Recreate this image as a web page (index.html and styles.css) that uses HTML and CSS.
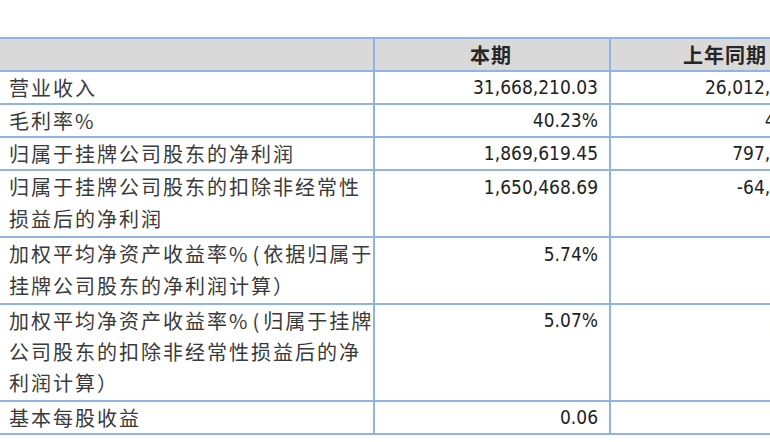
FILE: index.html
```html
<!DOCTYPE html>
<html lang="zh-CN">
<head>
<meta charset="utf-8">
<title>主要财务数据</title>
<link rel="stylesheet" href="styles.css">
</head>
<body>
<div class="page">
  <table class="fin">
    <colgroup>
      <col class="c-label">
      <col class="c-cur">
      <col class="c-prev">
    </colgroup>
    <thead>
      <tr>
        <th></th>
        <th>本期</th>
        <th>上年同期</th>
      </tr>
    </thead>
    <tbody>
      <tr>
        <td class="label">营业收入</td>
        <td class="num">31,668,210.03</td>
        <td class="num">26,012,068.31</td>
      </tr>
      <tr>
        <td class="label">毛利率%</td>
        <td class="num">40.23%</td>
        <td class="num">40.41%</td>
      </tr>
      <tr>
        <td class="label">归属于挂牌公司股东的净利润</td>
        <td class="num">1,869,619.45</td>
        <td class="num">797,318.35</td>
      </tr>
      <tr class="two">
        <td class="label">归属于挂牌公司股东的扣除非经常性<br>损益后的净利润</td>
        <td class="num">1,650,468.69</td>
        <td class="num">-64,823.12</td>
      </tr>
      <tr class="two">
        <td class="label">加权平均净资产收益率%<span class="paren">(</span>依据归属于<br>挂牌公司股东的净利润计算）</td>
        <td class="num">5.74%</td>
        <td class="num">2.59%</td>
      </tr>
      <tr class="three">
        <td class="label">加权平均净资产收益率%<span class="paren">(</span>归属于挂牌<br>公司股东的扣除非经常性损益后的净<br>利润计算）</td>
        <td class="num">5.07%</td>
        <td class="num">-0.21%</td>
      </tr>
      <tr>
        <td class="label">基本每股收益</td>
        <td class="num">0.06</td>
        <td class="num">0.03</td>
      </tr>
    </tbody>
  </table>
</div>
</body>
</html>
```
FILE: styles.css
```css
html, body {
  margin: 0;
  padding: 0;
  background: #ffffff;
}

.page {
  width: 770px;
  height: 442px;
  overflow: hidden;
  padding-top: 37px;
  box-sizing: border-box;
}

.fin {
  border-collapse: collapse;
  table-layout: fixed;
  width: 843px;
  margin-left: -2px;
  font-family: "Noto Sans CJK SC", sans-serif;
  color: #3a3a3a;
}

.c-label { width: 375px; }
.c-cur { width: 236px; }
.c-prev { width: 232px; }

.fin th,
.fin td {
  border: 2px solid #8db4e2;
  padding: 0 11px 0 9px;
  line-height: 31px;
  vertical-align: top;
  white-space: nowrap;
  overflow: hidden;
}

.fin th {
  background: #d9d9d9;
  font-size: 20px;
  font-weight: 700;
  color: #262626;
  text-align: center;
  letter-spacing: 1px;
  padding-top: 1px;
  line-height: 30px;
}

.fin td.label {
  font-size: 20px;
  letter-spacing: 2px;
  padding-left: 9px;
}

.fin .paren {
  letter-spacing: 4px;
  margin-left: 3px;
}

.fin tr.two td {
  line-height: 32px;
  padding-bottom: 1px;
}

.fin tr.three td {
  line-height: 31px;
  padding-bottom: 2px;
}

.fin td.num {
  font-family: "DejaVu Sans Condensed", "Liberation Sans Narrow", "Liberation Sans", sans-serif;
  font-size: 19px;
  color: #222222;
  text-align: right;
}
```
